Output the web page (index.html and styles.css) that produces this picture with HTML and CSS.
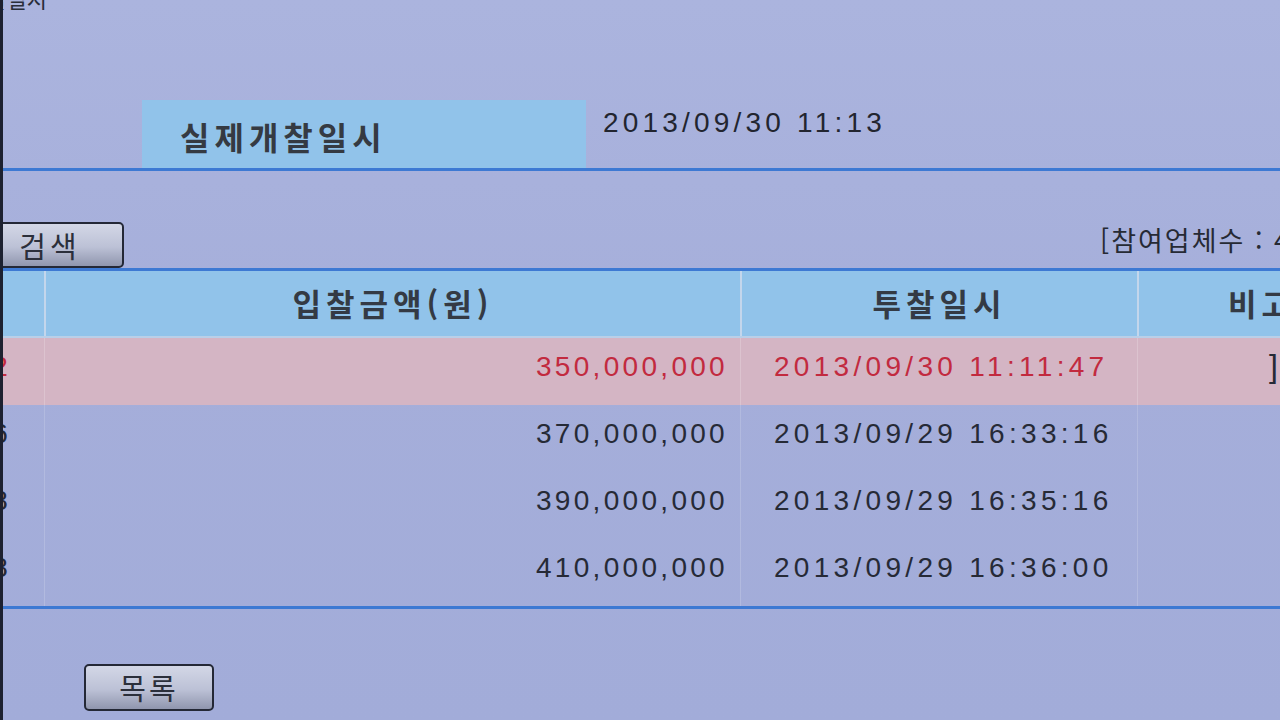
FILE: index.html
```html
<!DOCTYPE html>
<html lang="ko">
<head>
<meta charset="utf-8">
<link rel="stylesheet" href="styles.css">
</head>
<body>
<div class="page">
  <div class="content">
    <div class="cut-title">입찰일시</div>

    <div class="info">
      <div class="info-blank"></div>
      <div class="info-th">실제개찰일시</div>
      <div class="info-td">2013/09/30 11:13</div>
    </div>

    <div class="toolbar">
      <button class="btn btn-search">검색</button>
      <div class="count">[참여업체수 : 4]</div>
    </div>

    <div class="bids">
      <div class="row head">
        <div class="cell c1"></div>
        <div class="cell c2">입찰금액(원)</div>
        <div class="cell c3">투찰일시</div>
        <div class="cell c4">비고</div>
      </div>
      <div class="row win">
        <div class="cell c1 num">2</div>
        <div class="cell c2 amt">350,000,000</div>
        <div class="cell c3 dt">2013/09/30 11:11:47</div>
        <div class="cell c4 note">]</div>
      </div>
      <div class="row">
        <div class="cell c1 num">6</div>
        <div class="cell c2 amt">370,000,000</div>
        <div class="cell c3 dt">2013/09/29 16:33:16</div>
        <div class="cell c4"></div>
      </div>
      <div class="row">
        <div class="cell c1 num">8</div>
        <div class="cell c2 amt">390,000,000</div>
        <div class="cell c3 dt">2013/09/29 16:35:16</div>
        <div class="cell c4"></div>
      </div>
      <div class="row">
        <div class="cell c1 num">8</div>
        <div class="cell c2 amt">410,000,000</div>
        <div class="cell c3 dt">2013/09/29 16:36:00</div>
        <div class="cell c4"></div>
      </div>
    </div>

    <div class="footer">
      <button class="btn btn-list">목록</button>
    </div>
  </div>
</div>
</body>
</html>
```

FILE: styles.css
```css
html, body {
  margin: 0;
  padding: 0;
}
body {
  width: 1280px;
  height: 720px;
  overflow: hidden;
  background: #a6afdb;
}
.page {
  width: 1277px;
  height: 720px;
  overflow: hidden;
  border-left: 3px solid #1d2130;
  background: linear-gradient(180deg, #abb4de 0%, #a5aeda 50%, #a2acd9 100%);
  font-family: "Liberation Sans", "Noto Sans CJK KR", sans-serif;
  color: #262a36;
}
.content {
  margin-left: -47px;
  width: 1480px;
  display: flex;
  flex-direction: column;
}
.cut-title {
  height: 10px;
  overflow: hidden;
  display: flex;
  align-items: flex-end;
  line-height: 24px;
  font-size: 22px;
  font-family: "Noto Sans CJK KR", sans-serif;
  padding-left: 10px;
  color: #2a2e3a;
}
/* info row */
.info {
  margin-top: 90px;
  display: flex;
  height: 68px;
  border-bottom: 3px solid #3d79d3;
}
.info-blank {
  width: 186px;
}
.info-th {
  width: 444px;
  background: #91c3ea;
  font-family: "Noto Sans CJK KR", sans-serif;
  font-weight: 700;
  font-size: 32px;
  letter-spacing: 5px;
  color: #353a42;
  display: flex;
  align-items: center;
  padding-left: 38px;
  box-sizing: border-box;
  padding-top: 4px;
}
.info-td {
  padding-left: 17px;
  font-size: 28px;
  letter-spacing: 4.2px;
  display: flex;
  align-items: center;
  padding-bottom: 22px;
  color: #22252f;
}
/* toolbar */
.toolbar {
  margin-top: 51px;
  display: flex;
  align-items: center;
  gap: 976px;
  height: 46px;
}
.btn {
  font-family: "Noto Sans CJK KR", sans-serif;
  font-size: 29px;
  color: #2b2f3b;
  border: 2px solid #242836;
  border-radius: 5px;
  background: linear-gradient(180deg, #d3d7e6 0%, #bcc1d6 55%, #9096ae 100%);
  padding: 0;
  display: flex;
  align-items: center;
  justify-content: center;
  line-height: 1;
}
.btn-search {
  width: 168px;
  height: 46px;
  padding-left: 20px;
  letter-spacing: 4px;
}
.count {
  font-family: "Noto Sans CJK KR", sans-serif;
  font-size: 27px;
  letter-spacing: 2px;
  color: #262a34;
  padding-bottom: 12px;
}
/* bids table */
.bids {
  margin-top: 0;
  border-top: 3px solid #3d79d3;
  border-bottom: 3px solid #3d79d3;
  display: flex;
  flex-direction: column;
}
.row {
  display: grid;
  grid-template-columns: 88px 696px 397px 300px;
  height: 67px;
}
.cell {
  display: flex;
  align-items: center;
  box-sizing: border-box;
  padding-bottom: 10px;
}
.head {
  background: #91c3ea;
  border-bottom: 2px solid #b9cfe8;
  height: 65px;
}
.head .cell {
  font-family: "Noto Sans CJK KR", sans-serif;
  font-weight: 700;
  font-size: 31px;
  letter-spacing: 5px;
  color: #343a44;
  justify-content: center;
  padding-bottom: 2px;
}
.head .cell + .cell {
  border-left: 2px solid #c3d6ec;
}
.head .c4 {
  justify-content: flex-start;
  padding-left: 89px;
}
.row:not(.head) .cell + .cell {
  border-left: 1px solid #b2badf;
}
.win {
  background: #d4b5c4;
  color: #c22a3f;
}
.win .cell + .cell {
  border-left-color: #dcc3cf !important;
}
.num {
  justify-content: center;
  font-size: 28px;
}
.amt {
  justify-content: flex-end;
  padding-right: 12px;
  font-size: 28px;
  letter-spacing: 3.3px;
}
.dt {
  padding-left: 33px;
  font-size: 28px;
  letter-spacing: 4.3px;
}
.note {
  padding-left: 131px;
  font-size: 32px;
  color: #262a36;
}
/* footer */
.footer {
  margin-top: 55px;
  display: flex;
  padding-left: 128px;
}
.btn-list {
  width: 130px;
  height: 47px;
  letter-spacing: 3px;
}
```
